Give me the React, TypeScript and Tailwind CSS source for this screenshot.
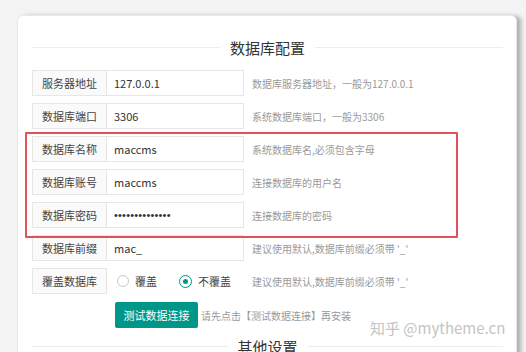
const cjk = { fontFamily: '"Noto Sans CJK SC", "Noto Sans", sans-serif' };

type Row = { label: string; value: string; hint: string; password?: boolean };

const rows: Row[] = [
  { label: '服务器地址', value: '127.0.0.1', hint: '数据库服务器地址，一般为127.0.0.1' },
  { label: '数据库端口', value: '3306', hint: '系统数据库端口，一般为3306' },
  { label: '数据库名称', value: 'maccms', hint: '系统数据库名,必须包含字母' },
  { label: '数据库账号', value: 'maccms', hint: '连接数据库的用户名' },
  { label: '数据库密码', value: '••••••••••••••', hint: '连接数据库的密码', password: true },
  { label: '数据库前缀', value: 'mac_', hint: "建议使用默认,数据库前缀必须带 '_'" },
];

const Heading = ({ text }: { text: string }) => (
  <div className="flex items-center gap-[8px] h-[16px]">
    <div className="flex-1 h-px bg-[#ececec]" />
    <span className="text-[15px] leading-none text-[#333] px-[2px]">{text}</span>
    <div className="flex-1 h-px bg-[#ececec]" />
  </div>
);

const Label = ({ text }: { text: string }) => (
  <div className="w-[75px] h-[26px] shrink-0 flex items-center justify-center border border-[#e6e6e6] bg-[#fafafa] text-[11px] text-[#444]">
    {text}
  </div>
);

const Radio = ({ checked, text }: { checked?: boolean; text: string }) => (
  <div className="flex items-center gap-[6px]">
    {checked ? (
      <span className="w-[13px] h-[13px] rounded-full border border-[#009688] bg-white flex items-center justify-center">
        <span className="block w-[5px] h-[5px] rounded-full bg-[#009688]" />
      </span>
    ) : (
      <span className="w-[12px] h-[12px] rounded-full border border-[#c9c9c9] bg-white" />
    )}
    <span className="text-[11px] text-[#444]">{text}</span>
  </div>
);

export default function App() {
  return (
    <div className="relative h-[352px] overflow-hidden bg-[#f3f3f3] pt-[15px] pl-[17px]" style={cjk}>
      <div className="relative w-[500px] h-[400px] bg-white rounded-[6px] border border-[#e8e8e8] shadow-[5px_0_4px_-1px_rgba(0,0,0,0.28)] pl-[14px] pr-[13px] pt-[23px]">
        <Heading text="数据库配置" />

        <div className="flex flex-col gap-[7px] mt-[15px]">
          {rows.map((r) => (
            <div key={r.label} className="flex items-center">
              <Label text={r.label} />
              <div className="w-[138px] h-[26px] -ml-px flex items-center border border-[#e6e6e6] px-[7px] text-[11px] text-[#333]">
                {r.password ? (
                  <span className="text-[11px] tracking-[0.2px]" style={{ fontFamily: '"Liberation Sans", sans-serif' }}>
                    {r.value}
                  </span>
                ) : (
                  <span>{r.value}</span>
                )}
              </div>
              <span className="ml-[8px] text-[10px] text-[#9a9a9a]">{r.hint}</span>
            </div>
          ))}

          <div className="flex items-center">
            <Label text="覆盖数据库" />
            <div className="w-[137px] h-[26px] flex items-center gap-[22px] pl-[10px]">
              <Radio text="覆盖" />
              <Radio checked text="不覆盖" />
            </div>
            <span className="ml-[8px] text-[10px] text-[#9a9a9a]">建议使用默认,数据库前缀必须带 '_'</span>
          </div>
        </div>

        <div className="flex items-center mt-[8px] pl-[83px]">
          <button className="w-[83px] h-[26px] bg-[#009688] text-white text-[11px] rounded-[2px]">测试数据连接</button>
          <span className="ml-[3px] text-[10px] text-[#9a9a9a]">请先点击【测试数据连接】再安装</span>
        </div>

        <div className="mt-[10px]">
          <Heading text="其他设置" />
        </div>

        <div className="absolute left-[7px] top-[116px] w-[433px] h-[106px] border-2 border-[#e0525a] rounded-[1px] pointer-events-none" />
      </div>

      <div className="absolute left-[370px] top-[317px] text-[15px] text-[#c4c4c4] [text-shadow:0_0_2px_#fff]">
        知乎 @mytheme.cn
      </div>
    </div>
  );
}
